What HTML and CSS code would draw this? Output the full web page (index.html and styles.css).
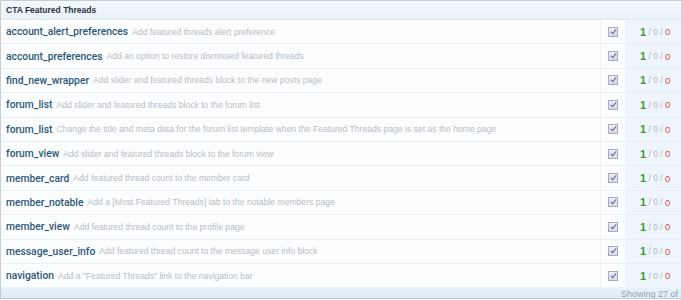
FILE: index.html
```html
<!DOCTYPE html>
<html lang="en">
<head>
    <meta charset="UTF-8">
    <title>CTA Featured Threads</title>
    <link rel="stylesheet" href="styles.css">
</head>
<body>
    <div class="section">
        <h3 class="sectionHeader">CTA Featured Threads</h3>
        <div class="list">
            <div class="row">
                <div class="label"><a class="name">account_alert_preferences</a> <span class="desc">Add featured threads alert preference</span></div>
                <div class="toggle"><span class="check"></span></div>
                <div class="count"><b>1</b> / 0 / <em>0</em></div>
            </div>
            <div class="row">
                <div class="label"><a class="name">account_preferences</a> <span class="desc">Add an option to restore dismissed featured threads</span></div>
                <div class="toggle"><span class="check"></span></div>
                <div class="count"><b>1</b> / 0 / <em>0</em></div>
            </div>
            <div class="row">
                <div class="label"><a class="name">find_new_wrapper</a> <span class="desc">Add slider and featured threads block to the new posts page</span></div>
                <div class="toggle"><span class="check"></span></div>
                <div class="count"><b>1</b> / 0 / <em>0</em></div>
            </div>
            <div class="row">
                <div class="label"><a class="name">forum_list</a> <span class="desc">Add slider and featured threads block to the forum list</span></div>
                <div class="toggle"><span class="check"></span></div>
                <div class="count"><b>1</b> / 0 / <em>0</em></div>
            </div>
            <div class="row">
                <div class="label"><a class="name">forum_list</a> <span class="desc">Change the title and meta data for the forum list template when the Featured Threads page is set as the home page</span></div>
                <div class="toggle"><span class="check"></span></div>
                <div class="count"><b>1</b> / 0 / <em>0</em></div>
            </div>
            <div class="row">
                <div class="label"><a class="name">forum_view</a> <span class="desc">Add slider and featured threads block to the forum view</span></div>
                <div class="toggle"><span class="check"></span></div>
                <div class="count"><b>1</b> / 0 / <em>0</em></div>
            </div>
            <div class="row">
                <div class="label"><a class="name">member_card</a> <span class="desc">Add featured thread count to the member card</span></div>
                <div class="toggle"><span class="check"></span></div>
                <div class="count"><b>1</b> / 0 / <em>0</em></div>
            </div>
            <div class="row">
                <div class="label"><a class="name">member_notable</a> <span class="desc">Add a [Most Featured Threads] tab to the notable members page</span></div>
                <div class="toggle"><span class="check"></span></div>
                <div class="count"><b>1</b> / 0 / <em>0</em></div>
            </div>
            <div class="row">
                <div class="label"><a class="name">member_view</a> <span class="desc">Add featured thread count to the profile page</span></div>
                <div class="toggle"><span class="check"></span></div>
                <div class="count"><b>1</b> / 0 / <em>0</em></div>
            </div>
            <div class="row">
                <div class="label"><a class="name">message_user_info</a> <span class="desc">Add featured thread count to the message user info block</span></div>
                <div class="toggle"><span class="check"></span></div>
                <div class="count"><b>1</b> / 0 / <em>0</em></div>
            </div>
            <div class="row">
                <div class="label"><a class="name">navigation</a> <span class="desc">Add a "Featured Threads" link to the navigation bar</span></div>
                <div class="toggle"><span class="check"></span></div>
                <div class="count"><b>1</b> / 0 / <em>0</em></div>
            </div>
            <div class="row">
                <div class="label"></div>
                <div class="toggle"><span class="check"></span></div>
                <div class="count"></div>
            </div>
        </div>
        <div class="sectionFooter">Showing 27 of 27 items</div>
    </div>
</body>
</html>
```

FILE: styles.css
```css
* {
    box-sizing: border-box;
}

body {
    margin: 0;
    background: #fff;
    font-family: 'Liberation Sans', Arial, sans-serif;
    overflow: hidden;
}

.section {
    width: 681px;
    height: 299px;
    border: 1px solid #c6ccd4;
    border-right: none;
    display: flex;
    flex-direction: column;
    overflow: hidden;
}

.sectionHeader {
    margin: 0;
    height: 19px;
    flex: none;
    padding: 0 5px;
    font-size: 8.5px;
    line-height: 19px;
    font-weight: bold;
    color: #2a3440;
    background: linear-gradient(#f3f8fc, #e9f2f9);
    border-bottom: 1px solid #dde7f0;
}

.list {
    flex: 1;
    overflow: hidden;
}

.row {
    display: flex;
    height: 24.4px;
    border-bottom: 1px solid #e8eef4;
    background: #fcfdfe;
}

.label {
    flex: 1;
    padding-left: 5px;
    display: flex;
    align-items: center;
    white-space: nowrap;
    overflow: hidden;
}

.name {
    font-family: Roboto, 'Liberation Sans', sans-serif;
    font-weight: 500;
    font-size: 10.3px;
    color: #2e5878;
}

.desc {
    margin-left: 4px;
    font-size: 8.6px;
    color: #b6bec8;
}

.toggle {
    width: 25px;
    flex: none;
    display: flex;
    align-items: center;
    padding-left: 7px;
    border-left: 1px solid #eef2f6;
}

.check {
    width: 10px;
    height: 10px;
    border: 1px solid #a6adb8;
    background: linear-gradient(#eceef3, #d8dce6);
    position: relative;
}

.check::after {
    content: "";
    position: absolute;
    left: 3px;
    top: 0px;
    width: 2px;
    height: 5px;
    border: solid #6a5aa8;
    border-width: 0 1.5px 1.5px 0;
    transform: rotate(40deg);
}

.count {
    width: 56px;
    flex: none;
    display: flex;
    align-items: center;
    padding-left: 15px;
    font-size: 8.5px;
    color: #b0b6be;
    background: #eef5fb;
    white-space: pre;
}

.count b {
    font-size: 11px;
    color: #3e9a2c;
}

.count em {
    font-style: normal;
    font-size: 9.5px;
    color: #e0504c;
}

.sectionFooter {
    flex: none;
    height: 11px;
    padding-left: 620px;
    font-size: 9px;
    line-height: 14px;
    color: #8ea4b8;
    background: linear-gradient(#eaf3fb, #dfecf7);
    white-space: nowrap;
    overflow: hidden;
}
```
